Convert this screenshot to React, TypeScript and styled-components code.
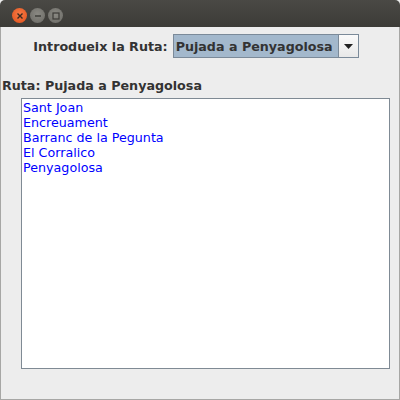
import React from "react";
import styled, { createGlobalStyle } from "styled-components";

const Global = createGlobalStyle`
  html, body { margin: 0; padding: 0; background: #ededed; }
  #root { width: 400px; height: 400px; }
`;

const Frame = styled.div`
  width: 400px;
  height: 400px;
  display: flex;
  flex-direction: column;
  font-family: "DejaVu Sans", sans-serif;
  font-size: 12.7px;
  color: #333333;
`;

const TitleBar = styled.div`
  height: 27px;
  flex: none;
  box-sizing: border-box;
  background: linear-gradient(#4a4945, #3c3b37);
  display: flex;
  align-items: flex-start;
  gap: 3px;
  padding: 8px 0 0 12px;
  border-radius: 5px 5px 0 0;
`;

const WinButton = styled.div<{ $close?: boolean }>`
  width: 15px;
  height: 15px;
  border-radius: 50%;
  background: ${(p) =>
    p.$close
      ? "radial-gradient(circle at 50% 40%, #f77a46, #e0501a)"
      : "radial-gradient(circle at 50% 40%, #8a8983, #6a6964)"};
  display: flex;
  align-items: center;
  justify-content: center;
`;

const Body = styled.div`
  flex: 1;
  background: #ededed;
  border: 1px solid #a7a7a5;
  border-top: none;
  display: flex;
  flex-direction: column;
`;

const TopRow = styled.div`
  display: flex;
  align-items: center;
  justify-content: center;
  gap: 5px;
  padding-top: 7px;
  padding-right: 8px;
`;

const Label = styled.span`
  font-weight: bold;
  color: #333333;
`;

const Combo = styled.div`
  display: flex;
  height: 24px;
  box-sizing: border-box;
  border: 1px solid #7b8a99;
`;

const ComboValue = styled.div`
  background: #a3b8cc;
  border-right: 1px solid #7b8a99;
  display: flex;
  align-items: center;
  padding: 0 5px 0 2px;
  font-weight: bold;
  color: #333333;
`;

const ComboArrow = styled.div`
  width: 19px;
  background: linear-gradient(#fafafa, #e8e8e8);
  display: flex;
  align-items: center;
  justify-content: center;
`;

const RouteLabel = styled(Label)`
  margin-top: 20px;
  margin-left: 1px;
  line-height: 15px;
`;

const List = styled.div`
  margin: 5px 9px 30px 20px;
  flex: 1;
  background: #ffffff;
  border: 1px solid #7f8a94;
  display: flex;
  flex-direction: column;
  padding: 1px 0 0 1px;
`;

const Item = styled.div`
  color: #0000ff;
  line-height: 15px;
  height: 15px;
`;

const items = ["Sant Joan", "Encreuament", "Barranc de la Pegunta", "El Corralico", "Penyagolosa"];

export default function App() {
  return (
    <Frame>
      <Global />
      <TitleBar>
        <WinButton $close>
          <svg width="8" height="8" viewBox="0 0 8 8">
            <path d="M1.5 1.5 L6.5 6.5 M6.5 1.5 L1.5 6.5" stroke="#3a2a20" strokeWidth="1.4" />
          </svg>
        </WinButton>
        <WinButton>
          <svg width="8" height="8" viewBox="0 0 8 8">
            <path d="M1 4 H7" stroke="#3c3b37" strokeWidth="1.4" />
          </svg>
        </WinButton>
        <WinButton>
          <svg width="8" height="8" viewBox="0 0 8 8">
            <rect x="1" y="1" width="6" height="6" fill="none" stroke="#3c3b37" strokeWidth="1.2" />
          </svg>
        </WinButton>
      </TitleBar>
      <Body>
        <TopRow>
          <Label>Introdueix la Ruta:</Label>
          <Combo>
            <ComboValue>Pujada a Penyagolosa</ComboValue>
            <ComboArrow>
              <svg width="9" height="5" viewBox="0 0 9 5">
                <path d="M0 0 H9 L4.5 5 Z" fill="#222" />
              </svg>
            </ComboArrow>
          </Combo>
        </TopRow>
        <RouteLabel as="div">Ruta: Pujada a Penyagolosa</RouteLabel>
        <List>
          {items.map((t) => (
            <Item key={t}>{t}</Item>
          ))}
        </List>
      </Body>
    </Frame>
  );
}
